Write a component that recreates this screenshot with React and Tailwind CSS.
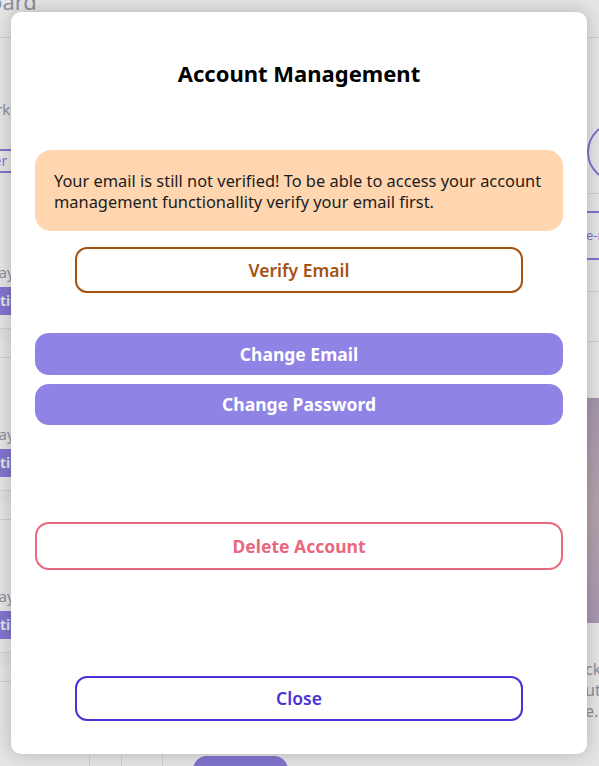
export default function App() {
  const cards = [0, 1, 2];
  return (
    <div className="relative w-[599px] h-[766px] overflow-hidden bg-white font-['Noto_Sans',sans-serif]">
      {/* background page */}
      <div className="flex flex-col h-full">
        <div className="h-[52px] shrink-0 border-b border-gray-200 -mt-[14px]">
          <div className="-ml-[77px] text-[22px] leading-[30px] text-gray-400">Dashboard</div>
        </div>
        <div className="flex flex-1 min-h-0">
          <div className="w-[170px] -ml-[80px] shrink-0 border-r border-gray-200 flex flex-col">
            <div className="pt-[60px] pl-[30px] text-[15px] text-gray-400">Network</div>
            <div className="mt-[28px] mb-[23px] mx-[10px] h-[24px] border-2 border-[#9083e6] rounded-[4px] pl-[42px] text-[14px] leading-[20px] text-[#9083e6]">Filter</div>
            {cards.map((c) => (
              <div key={c} className="flex flex-col pt-[66px] border-b border-gray-200 h-[162px] shrink-0">
                <div className="pl-[53px] text-[15px] leading-[20px] text-gray-400">Today</div>
                <div className="mt-[5px] ml-[30px] w-[100px] h-[28px] bg-[#9083e6] rounded-[4px] text-white text-[14px] font-bold leading-[28px] pl-[33px]">Actions</div>
                <div className="mt-[13px] h-[13px] border-t border-gray-200 bg-gray-50"></div>
              </div>
            ))}
          </div>
          <div className="w-[32px] shrink-0 border-r border-gray-200"></div>
          <div className="w-[41px] shrink-0 border-r border-gray-200"></div>
          <div className="flex-1 flex flex-col justify-end pl-[30px]">
            <div className="w-[95px] h-[30px] -mb-[20px] bg-[#9083e6] rounded-[14px]"></div>
          </div>
          <div className="w-[120px] shrink-0 -mr-[106px] flex flex-col">
            <div className="mt-[84px] ml-[2px] w-[60px] h-[60px] rounded-full border-2 border-[#9083e6]"></div>
            <div className="mt-[11px] border-t border-gray-200"></div>
            <div className="mt-[17px] h-[49px] border-y-2 border-[#9083e6] text-[13px] leading-[45px] text-[#9083e6] pl-[1px]">e-mail</div>
            <div className="mt-[31px] border-t border-gray-200"></div>
            <div className="mt-[49px] border-t border-gray-200"></div>
            <div className="mt-[56px] h-[225px] bg-gradient-to-b from-[#b8a8c0] via-[#c9b6c0] to-[#bba9c4]"></div>
            <div className="mt-[36px] text-[16px] leading-[21px] text-gray-400">
              <div>ck</div>
              <div>ut</div>
              <div>e.</div>
            </div>
          </div>
        </div>
      </div>

      {/* overlay */}
      <div className="absolute inset-0 bg-black/10 flex items-start">
        <div className="mt-[12px] ml-[11px] w-[576px] h-[742px] rounded-[10px] bg-white shadow-[0_0_18px_rgba(0,0,0,0.22)] flex flex-col items-center px-[24px]">
          <h2 className="mt-[46px] text-[22px] leading-[30px] font-bold text-black">Account Management</h2>
          <div className="mt-[62px] w-full h-[81px] rounded-[16px] bg-[#ffd6b0] pl-[19px] pr-[10px] flex items-center text-[16.4px] leading-[21px] text-[#1c1c1c]">
            Your email is still not verified! To be able to access your account management functionallity verify your email first.
          </div>
          <button className="mt-[16px] w-[448px] h-[46px] rounded-[12px] border-2 border-[#a5520f] text-[#a5520f] text-[17.5px] font-semibold">Verify Email</button>
          <button className="mt-[40px] w-full h-[42px] rounded-[14px] bg-[#9083e6] text-white text-[17.5px] font-bold">Change Email</button>
          <button className="mt-[9px] w-full h-[41px] rounded-[14px] bg-[#9083e6] text-white text-[17.5px] font-bold">Change Password</button>
          <button className="mt-[97px] w-full h-[48px] rounded-[14px] border-2 border-[#e8687d] text-[#e8687d] text-[17.5px] font-bold">Delete Account</button>
          <button className="mt-[106px] w-[448px] h-[45px] rounded-[12px] border-2 border-[#4b31d8] text-[#4b31d8] text-[17.5px] font-semibold">Close</button>
        </div>
      </div>
    </div>
  );
}
